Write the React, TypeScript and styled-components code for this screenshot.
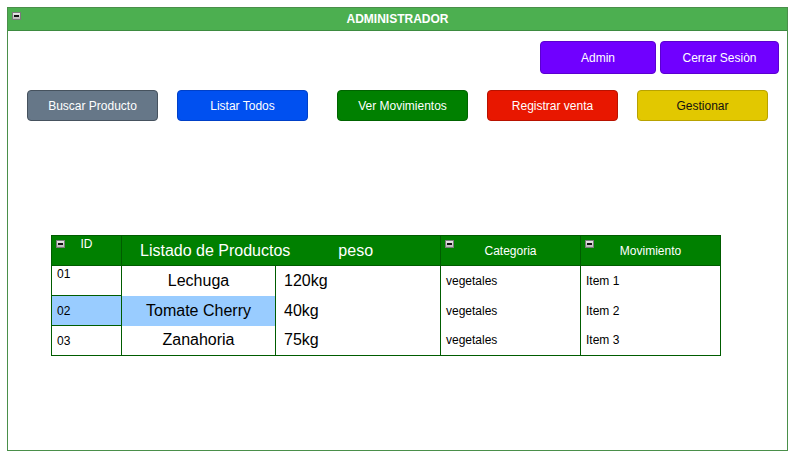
import React from "react";
import styled, { createGlobalStyle } from "styled-components";

const Global = createGlobalStyle`
  html, body { margin: 0; padding: 0; background: #fff; }
  body { font-family: "Liberation Sans", Arial, sans-serif; }
`;

const Page = styled.div`
  padding: 7px 8px 8px 7px;
`;

const Frame = styled.div`
  width: 781px;
  height: 444px;
  box-sizing: border-box;
  border: 1px solid #4a8f4a;
  display: flex;
  flex-direction: column;
`;

const Header = styled.div`
  position: relative;
  height: 22px;
  background: #4caf50;
  border-bottom: 1px solid #3d8b40;
  display: flex;
  align-items: center;
  justify-content: center;
  color: #fff;
  font-weight: bold;
  font-size: 12px;
`;

const Minimize = styled.span<{ $left?: number; $top?: number }>`
  position: absolute;
  left: ${(p) => p.$left ?? 4}px;
  top: ${(p) => p.$top ?? 4}px;
  width: 9px;
  height: 8px;
  box-sizing: border-box;
  border: 1px solid #7a7a7a;
  background: linear-gradient(#e8e8e8, #b8b8b8);
  &::after {
    content: "";
    position: absolute;
    left: 1px;
    top: 2px;
    width: 5px;
    height: 2px;
    background: #111;
  }
`;

const TopBar = styled.div`
  display: flex;
  justify-content: flex-end;
  gap: 4px;
  padding: 10px 8px 0 0;
`;

const ActionBar = styled.div`
  display: flex;
  padding: 16px 0 0 19px;
`;

type Tone = "purple" | "slate" | "blue" | "green" | "red" | "yellow";
const tones: Record<Tone, [string, string, string]> = {
  purple: ["#7000ff", "#5b00d0", "#fff"],
  slate: ["#667788", "#46525e", "#fff"],
  blue: ["#0050f0", "#0040c8", "#fff"],
  green: ["#008000", "#006400", "#fff"],
  red: ["#e81700", "#b81200", "#fff"],
  yellow: ["#e2c800", "#b8a200", "#111"],
};

const Button = styled.button<{ $tone: Tone; $w: number; $h?: number; $ml?: number }>`
  width: ${(p) => p.$w}px;
  height: ${(p) => p.$h ?? 31}px;
  margin-left: ${(p) => p.$ml ?? 0}px;
  box-sizing: border-box;
  background: ${(p) => tones[p.$tone][0]};
  border: 1px solid ${(p) => tones[p.$tone][1]};
  color: ${(p) => tones[p.$tone][2]};
  border-radius: 4px;
  font-family: "Liberation Sans", Arial, sans-serif;
  font-size: 12px;
  padding: 0;
  cursor: pointer;
`;

const TableWrap = styled.div`
  padding: 114px 0 0 43px;
`;

const Table = styled.table`
  border-collapse: collapse;
  width: 670px;
  table-layout: fixed;
  border: 1px solid #005c00;
  font-family: "Liberation Sans", Arial, sans-serif;
`;

const Th = styled.th`
  position: relative;
  height: 28px;
  padding: 0;
  background: #008000;
  color: #fff;
  border: 1px solid #005c00;
  font-size: 12px;
  font-weight: normal;
  text-align: center;
  vertical-align: middle;
`;

const IdTh = styled(Th)`
  vertical-align: top;
  padding-top: 1px;
`;

const TitleCell = styled(Th)`
  font-size: 16px;
  text-align: left;
`;

const TitleRow = styled.div`
  display: flex;
  padding-left: 18px;
  gap: 48px;
`;

const IdTd = styled.td<{ $sel?: boolean; $top?: boolean }>`
  height: ${(p) => (p.$top ? 28 : 29)}px;
  padding: ${(p) => (p.$top ? "1px 0 0 5px" : "0 0 0 5px")};
  font-size: 12px;
  vertical-align: ${(p) => (p.$top ? "top" : "middle")};
  border: 1px solid #005c00;
  background: ${(p) => (p.$sel ? "#99ccff" : "#fff")};
  color: #000;
`;

const NameTd = styled.td<{ $sel?: boolean }>`
  padding: 0;
  font-size: 16px;
  text-align: center;
  border-left: 1px solid #005c00;
  border-right: 1px solid #005c00;
  background: ${(p) => (p.$sel ? "#99ccff" : "#fff")};
  color: #000;
`;

const WeightTd = styled.td`
  padding: 0 0 0 8px;
  font-size: 16px;
  border-right: 1px solid #005c00;
  color: #000;
`;

const SmallTd = styled.td`
  padding: 0 0 0 5px;
  font-size: 12px;
  border-right: 1px solid #005c00;
  color: #000;
`;

const rows = [
  { id: "01", name: "Lechuga", peso: "120kg", cat: "vegetales", mov: "Item 1" },
  { id: "02", name: "Tomate Cherry", peso: "40kg", cat: "vegetales", mov: "Item 2", sel: true },
  { id: "03", name: "Zanahoria", peso: "75kg", cat: "vegetales", mov: "Item 3" },
];

export default function App() {
  return (
    <>
      <Global />
      <Page>
        <Frame>
          <Header>
            <Minimize />
            ADMINISTRADOR
          </Header>
          <TopBar>
            <Button $tone="purple" $w={116} $h={33}>Admin</Button>
            <Button $tone="purple" $w={119} $h={33}>Cerrar Sesiòn</Button>
          </TopBar>
          <ActionBar>
            <Button $tone="slate" $w={131}>Buscar Producto</Button>
            <Button $tone="blue" $w={131} $ml={19}>Listar Todos</Button>
            <Button $tone="green" $w={131} $ml={29}>Ver Movimientos</Button>
            <Button $tone="red" $w={131} $ml={19}>Registrar venta</Button>
            <Button $tone="yellow" $w={131} $ml={19}>Gestionar</Button>
          </ActionBar>
          <TableWrap>
            <Table>
              <colgroup>
                <col style={{ width: 70 }} />
                <col style={{ width: 154 }} />
                <col style={{ width: 165 }} />
                <col style={{ width: 140 }} />
                <col style={{ width: 140 }} />
              </colgroup>
              <thead>
                <tr>
                  <IdTh>
                    <Minimize $left={4} $top={4} />
                    ID
                  </IdTh>
                  <TitleCell colSpan={2}>
                    <TitleRow>
                      <span>Listado de Productos</span>
                      <span>peso</span>
                    </TitleRow>
                  </TitleCell>
                  <Th>
                    <Minimize $left={4} $top={4} />
                    Categoria
                  </Th>
                  <Th>
                    <Minimize $left={4} $top={4} />
                    Movimiento
                  </Th>
                </tr>
              </thead>
              <tbody>
                {rows.map((r, i) => (
                  <tr key={r.id}>
                    <IdTd $sel={r.sel} $top={i === 0}>{r.id}</IdTd>
                    <NameTd $sel={r.sel}>{r.name}</NameTd>
                    <WeightTd>{r.peso}</WeightTd>
                    <SmallTd>{r.cat}</SmallTd>
                    <SmallTd>{r.mov}</SmallTd>
                  </tr>
                ))}
              </tbody>
            </Table>
          </TableWrap>
        </Frame>
      </Page>
    </>
  );
}
